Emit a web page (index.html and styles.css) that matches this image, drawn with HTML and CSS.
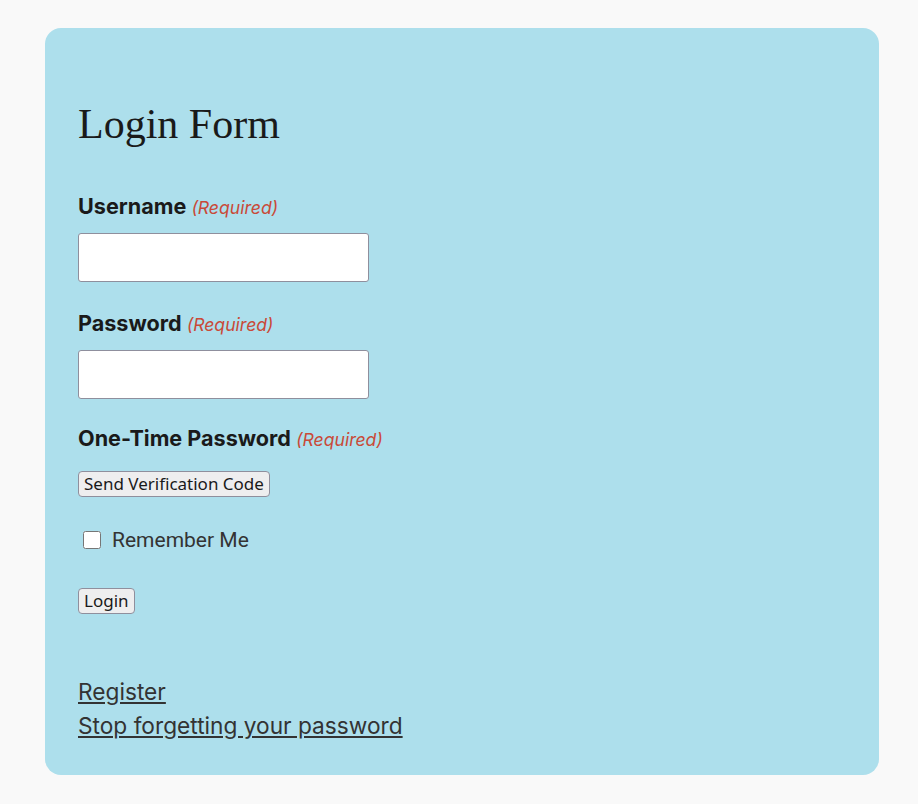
FILE: index.html
```html
<!DOCTYPE html>
<html lang="en">
<head>
    <meta charset="UTF-8">
    <meta name="viewport" content="width=device-width, initial-scale=1.0">
    <title>Login Form</title>
    <link rel="stylesheet" href="styles.css">
</head>
<body>
    <div class="card">
        <h1>Login Form</h1>

        <form class="login-form" onsubmit="return false">
            <div class="field">
                <label for="username">Username <span class="req">(Required)</span></label>
                <input type="text" id="username" required>
            </div>

            <div class="field">
                <label for="password">Password <span class="req">(Required)</span></label>
                <input type="password" id="password" required>
            </div>

            <div class="field otp">
                <label>One-Time Password <span class="req">(Required)</span></label>
                <button type="button">Send Verification Code</button>
            </div>

            <div class="remember">
                <input type="checkbox" id="remember">
                <label for="remember">Remember Me</label>
            </div>

            <button type="submit">Login</button>
        </form>

        <div class="links">
            <a href="#">Register</a>
            <a href="#">Stop forgetting your password</a>
        </div>
    </div>
</body>
</html>
```

FILE: styles.css
```css
body {
    margin: 0;
    padding: 28px 39px 29px 45px;
    background-color: #f9f9f9;
    font-family: Inter, "Noto Sans", sans-serif;
    color: #1a1a1a;
}
.card {
    background-color: #addfec;
    border-radius: 16px;
    padding: 72px 33px 35px;
    height: 640px;
}
h1 {
    font-family: "Liberation Serif", serif;
    font-weight: normal;
    font-size: 42px;
    margin: 0 0 46px;
    color: #1a1a1a;
}
.field {
    margin-bottom: 29px;
}
.field label {
    display: block;
    font-size: 21.6px;
    line-height: 24px;
    height: 24px;
    font-weight: 700;
    margin-bottom: 15px;
}
.req {
    font-size: 17.6px;
    line-height: 1;
    font-weight: normal;
    font-style: italic;
    color: #c94a38;
}
.field input {
    display: block;
    width: 291px;
    height: 49px;
    box-sizing: border-box;
    border: 1px solid #8f8f9d;
    border-radius: 3px;
    background: #fff;
}
.otp {
    margin-top: -2px;
    margin-bottom: 31px;
}
.otp label {
    margin-bottom: 21px;
}
button {
    font-family: "Noto Sans", sans-serif;
    font-size: 17px;
    color: #1a1a1a;
    background-color: #eeeeef;
    border: 1px solid #8f8f9d;
    border-radius: 4px;
    padding: 0 5px;
    height: 26px;
    line-height: 24px;
}
.remember {
    display: flex;
    align-items: center;
    gap: 11px;
    margin: 0 0 36px 5px;
}
.remember input {
    width: 18px;
    height: 18px;
    margin: 0;
}
.remember label {
    font-family: Roboto, sans-serif;
    font-size: 21px;
    color: #333;
}
.links {
    margin-top: 64px;
    display: flex;
    flex-direction: column;
    align-items: flex-start;
    gap: 7px;
}
.links a {
    font-size: 22.7px;
    color: #333;
    line-height: 27px;
}
```
